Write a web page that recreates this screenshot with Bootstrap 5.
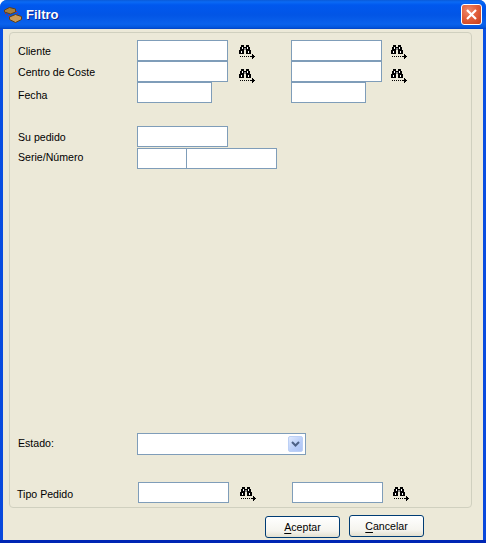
<!DOCTYPE html>
<html lang="es">
<head>
<meta charset="UTF-8" />
<title>Filtro</title>
<link href="https://cdn.jsdelivr.net/npm/bootstrap@5.3.0/dist/css/bootstrap.min.css" rel="stylesheet" />
<style>
  html, body { height: 100%; background: #fff; }
  body { font-family: "Liberation Sans", Arial, sans-serif; font-size: 10.6px; color: #000; overflow: hidden; }
  .xp-window {
    width: 486px; height: 543px; border-radius: 7px 7px 0 0; overflow: hidden;
    background: linear-gradient(180deg, #0850e4 0, #0848dc 540px, #0026b4 540px);
  }
  .xp-title {
    height: 29px; flex: none; padding: 0 4px 0 3px; color: #fff;
    background: linear-gradient(180deg, #0a5bd8 0, #0a6af5 2px, #0058ee 5px, #0255e6 15px, #0a62ec 24px, #0358e0 27px, #0343c4 29px);
  }
  .xp-title-text { font-weight: 700; font-size: 13px; text-shadow: 1px 1px 0 #0f1f8a; margin-left: 3px; }
  .xp-close {
    width: 21px; height: 21px; padding: 0; border: 1px solid #fff; border-radius: 3px;
    background: radial-gradient(circle at 35% 30%, #ee8a6e 0, #e2603c 45%, #c63c1a 100%);
  }
  .xp-body { height: 511px; flex: none; margin: 0 3px; background: #ece9d8; padding: 3px 11px 0 6px; }
  .xp-frame { height: 476px; border: 1px solid #d0d0bf; border-radius: 4px; padding: 7px 0 0 8px; }
  .xp-row { height: 21px; }
  .xp-label { width: 119px; flex: none; line-height: 21px; padding-top: 1px; }
  .xp-label-fecha { padding-top: 3px; }
  .xp-label-serie { margin-top: -2px; }
  .xp-label-estado { padding-top: 0; }
  .xp-input { height: 21px; border: 1px solid #7f9db9; background: #fff; flex: none; }
  .xp-w91 { width: 91px; }
  .xp-w75 { width: 75px; }
  .xp-w49 { width: 50px; }
  .xp-merge { margin-left: -1px; }
  .xp-find { width: 17px; height: 15px; margin: 5px 35px 0 11px; flex: none; display: block; }
  .xp-find-low { margin-top: 8px; }
  .xp-find-end { margin-left: 9px; }
  .xp-find-tipo { margin-left: 10px; }
  .xp-skip { margin-left: 79px; }
  .xp-spacer-a { margin-top: 23px; }
  .xp-gap-1 { margin-top: 1px; }
  .xp-spacer-b { margin-top: 264px; }
  .xp-spacer-c { margin-top: 28px; }
  .xp-combo { width: 169px; height: 22px; padding: 2px; }
  .xp-combo-btn {
    width: 15px; height: 16px; margin-left: auto; border-radius: 2px; border: 1px solid #bcd0f5;
    background: linear-gradient(135deg, #dfe9fd 0, #b8cdf8 60%, #aec4f5 100%);
  }
  .xp-tipo { width: 121px; margin-left: -1px; padding-top: 2px; }
  .xp-btn {
    width: 75px; height: 22px; padding: 0; font-size: 10.6px; color: #000; line-height: 18px;
    border: 1px solid #003c74; border-radius: 3px;
    background: linear-gradient(180deg, #fff 0, #f5f4ee 70%, #e3e0d0 100%);
  }
  .xp-btn u { text-underline-offset: 2px; }
  .xp-bottom { padding-left: 256px; padding-top: 8px; }
  .xp-higher { margin-left: 9px; margin-top: -1px; }
</style>
</head>
<body>
<svg width="0" height="0" class="d-block position-absolute">
  <symbol id="find" viewBox="0 0 17 15" shape-rendering="crispEdges">
    <path fill="#000" d="M2 0h3v2h2V0h3v2h1v3h1v4H7V5H5v4H0V5h1V2h1z"/>
    <path fill="#888" d="M5 3h2v2H5z"/>
    <path fill="#fff" d="M2 6h1v2H2zM9 6h1v2H9zM3 2h1v2H3zM8 2h1v2H8z"/>
    <path fill="#000" d="M1 11h1v1H1zM3 11h1v1H3zM5 11h1v1H5zM7 11h1v1H7zM9 11h1v1H9zM11 11h3v1h-3zM13 9h1v5h-1zM14 10h1v3h-1zM15 11h1v1h-1z"/>
  </symbol>
</svg>
<div class="xp-window d-flex flex-column">
  <div class="xp-title d-flex align-items-center">
    <svg width="20" height="18" viewBox="0 0 20 18">
      <path fill="#a87f3e" stroke="#5e4018" d="M1.5 4l5-2.5 6 1.5v3l-5 2-6-2z"/>
      <path fill="#c89a58" stroke="#5e4018" d="M6.5 11l6-2.5 6 2v3l-6 3-6-3z"/>
      <path fill="none" stroke="#d02020" stroke-dasharray="1.5 1" d="M2 7l5 4M13 5l2 3"/>
    </svg>
    <span class="xp-title-text">Filtro</span>
    <button type="button" class="xp-close ms-auto d-flex align-items-center justify-content-center" aria-label="Cerrar">
      <svg width="11" height="11" viewBox="0 0 11 11"><path stroke="#fff" stroke-width="2.2" d="M1 1l9 9M10 1l-9 9"/></svg>
    </button>
  </div>
  <div class="xp-body">
    <div class="xp-frame">
      <div class="xp-row d-flex">
        <div class="xp-label">Cliente</div>
        <div class="xp-input xp-w91"></div>
        <svg class="xp-find"><use href="#find"/></svg>
        <div class="xp-input xp-w91"></div>
        <svg class="xp-find xp-find-end"><use href="#find"/></svg>
      </div>
      <div class="xp-row d-flex">
        <div class="xp-label">Centro de Coste</div>
        <div class="xp-input xp-w91"></div>
        <svg class="xp-find xp-find-low"><use href="#find"/></svg>
        <div class="xp-input xp-w91"></div>
        <svg class="xp-find xp-find-low xp-find-end"><use href="#find"/></svg>
      </div>
      <div class="xp-row d-flex">
        <div class="xp-label xp-label-fecha">Fecha</div>
        <div class="xp-input xp-w75"></div>
        <div class="xp-input xp-w75 xp-skip"></div>
      </div>
      <div class="xp-row d-flex xp-spacer-a">
        <div class="xp-label">Su pedido</div>
        <div class="xp-input xp-w91"></div>
      </div>
      <div class="xp-row d-flex xp-gap-1">
        <div class="xp-label xp-label-serie">Serie/Número</div>
        <div class="xp-input xp-w49"></div>
        <div class="xp-input xp-w91 xp-merge"></div>
      </div>
      <div class="xp-row d-flex xp-spacer-b">
        <div class="xp-label xp-label-estado">Estado:</div>
        <div class="xp-input xp-combo d-flex">
          <div class="xp-combo-btn d-flex align-items-center justify-content-center">
            <svg width="9" height="7" viewBox="0 0 9 7"><path fill="none" stroke="#4d6185" stroke-width="2" d="M1 1l3.5 3.5L8 1"/></svg>
          </div>
        </div>
      </div>
      <div class="xp-row d-flex xp-spacer-c">
        <div class="xp-label xp-tipo">Tipo Pedido</div>
        <div class="xp-input xp-w91"></div>
        <svg class="xp-find"><use href="#find"/></svg>
        <div class="xp-input xp-w91"></div>
        <svg class="xp-find xp-find-tipo"><use href="#find"/></svg>
      </div>
    </div>
    <div class="xp-bottom d-flex align-items-start">
      <button type="button" class="xp-btn"><u>A</u>ceptar</button>
      <button type="button" class="xp-btn xp-higher"><u>C</u>ancelar</button>
    </div>
  </div>
</div>
</body>
</html>
